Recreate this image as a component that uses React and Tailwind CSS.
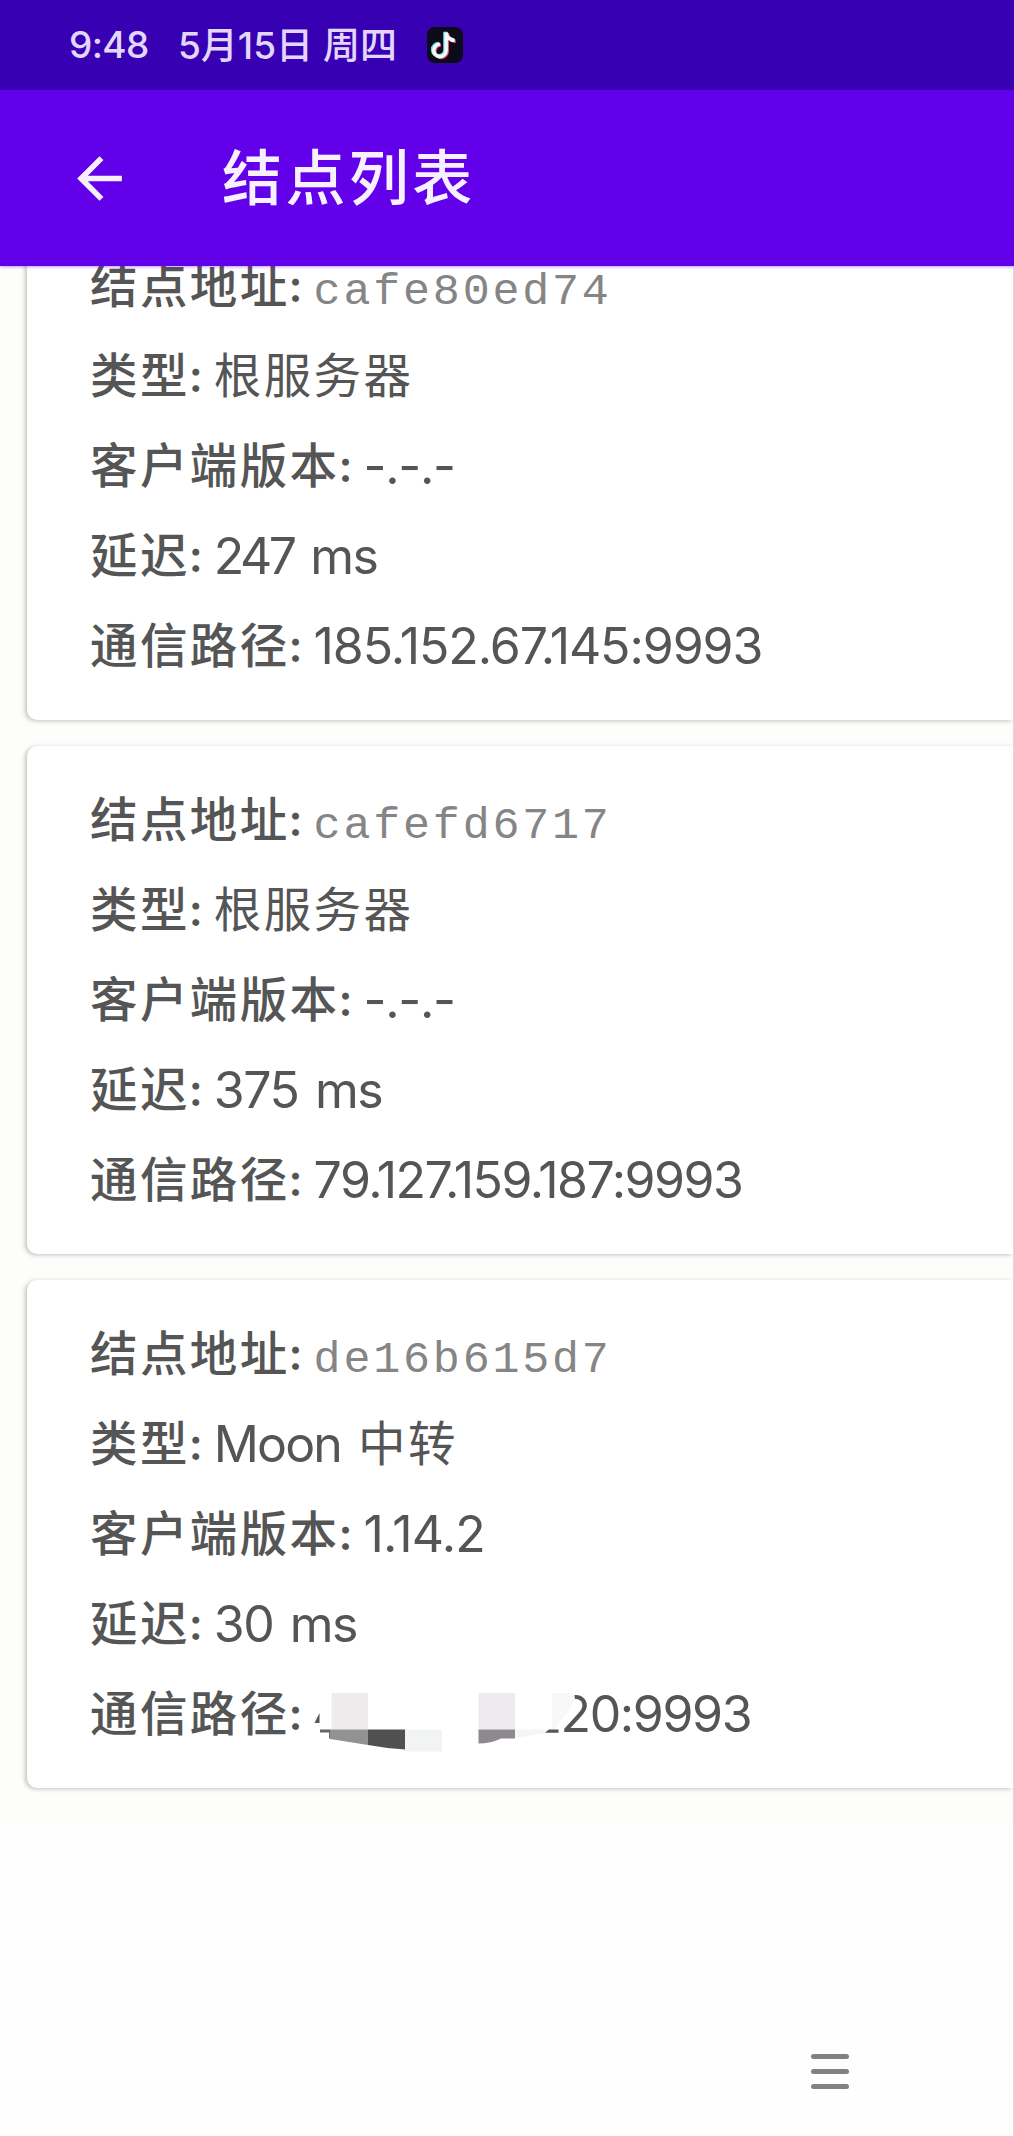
import React from 'react';

const NODES = [
  {
    address: 'cafe80ed74',
    type: '根服务器',
    version: '-.-.-',
    versionSpacing: 'tracking-[-1.300px]',
    latency: '247',
    latencySpacing: 'tracking-[-3.500px]',
    path: '185.152.67.145:9993',
    pathSpacing: 'tracking-[-1.080px]',
  },
  {
    address: 'cafefd6717',
    type: '根服务器',
    version: '-.-.-',
    versionSpacing: 'tracking-[-1.300px]',
    latency: '375',
    latencySpacing: 'tracking-[-1.500px]',
    path: '79.127.159.187:9993',
    pathSpacing: 'tracking-[-1.500px]',
  },
  {
    address: 'de16b615d7',
    prefix: 'Moon ',
    type: '中转',
    version: '1.14.2',
    versionSpacing: 'tracking-[-0.800px]',
    latency: '30',
    latencySpacing: 'tracking-[-1.500px]',
    path: '20:9993',
    pathSpacing: 'tracking-[-1.400px]',
    masked: true,
  },
];

function StatusBar() {
  return (
    <div className="h-[90px] shrink-0 bg-[#3700b3] flex items-center pl-[69px] text-[#e3d6fb] text-[37px] font-medium whitespace-pre">
      <span className="w-[109px] tracking-[-0.600px]">9:48</span>
      <span className="w-[249px] pt-0.5">5月15日 周四</span>
      <svg className="w-9 h-9" viewBox="0 0 36 36">
        <rect width="36" height="36" rx="8" fill="#0d0b18" />
        <g fill="none" strokeWidth="3.600">
          <path d="M18.500 5v18a6.200 6.200 0 1 1-6.200-6.200M18.500 5c.5 4.500 4 8 8.500 8" stroke="#4fe0dc" transform="translate(-.5 -.3)" />
          <path d="M18.500 5v18a6.200 6.200 0 1 1-6.200-6.200M18.500 5c.5 4.500 4 8 8.500 8" stroke="#f0506a" transform="translate(1.700 1.200)" />
          <path d="M18.500 5v18a6.200 6.200 0 1 1-6.200-6.200M18.500 5c.5 4.500 4 8 8.500 8" stroke="#f2fbfb" transform="translate(.6 .4)" />
        </g>
      </svg>
    </div>
  );
}

function AppBar() {
  return (
    <div className="h-[176px] shrink-0 bg-[#6200ea] flex items-center pl-[66px] relative z-10 shadow-[0_1px_3px_rgba(98,0,234,0.4)]">
      <svg className="w-[67px] h-[67px]" viewBox="0 0 24 24" fill="#f7f0ff">
        <path d="M20 11H7.830l5.590-5.590L12 4l-8 8 8 8 1.410-1.410L7.830 13H20v-2z" />
      </svg>
      <h1 className="ml-[89px] text-[60px] tracking-[3.400px] font-medium text-[#f7f0ff]">结点列表</h1>
    </div>
  );
}

// Mosaic that hides the first part of the address
function Mask() {
  return (
    <svg className="w-[249px] h-[90px] -ml-0.5" viewBox="312 1669 249 90">
      <path d="M314.500 1723l5-10v10z" fill="#555" />
      <path d="M320 1729.500h11v9h-2v-6h-9z" fill="#666" />
      <rect x="331.500" y="1693" width="36.500" height="36.500" fill="#efebed" />
      <path d="M330 1729.500h38V1745l-38-6z" fill="#939292" />
      <path d="M368 1729.500h37v20q-18-1-37-4.500z" fill="#505050" />
      <rect x="405" y="1729.500" width="37" height="22" fill="#f2f4f3" />
      <rect x="478.500" y="1693" width="36.500" height="36.500" fill="#eeeaed" />
      <path d="M478.500 1729.500H515v9h-14q-10 5-22.500 5z" fill="#8e898e" />
      <path d="M515 1729.500h34l-4 3.500-30 5z" fill="#f6f4f6" />
      <path d="M552 1693h9v26l-7 10h-2z" fill="#f8f8f8" />
      <path d="M549 1729.500h9.500v3.200H545z" fill="#555" />
    </svg>
  );
}

// Pale tile of the mosaic that runs over the first digit
function MaskEdge() {
  return (
    <svg className="absolute left-0 top-0 w-4 h-[90px]" viewBox="0 0 16 90">
      <path d="M0 24h13l1 6-6 12-8 10z" fill="#f8f8f8" />
    </svg>
  );
}

function Row({ label, children }) {
  return (
    <div className="h-[90px] flex items-center whitespace-pre text-[#555]">
      <span className="text-[47.500px] tracking-[2.400px] font-medium">{label}</span>
      <span className="w-6 -ml-px mr-px text-[44px] font-semibold">:</span>
      {children}
    </div>
  );
}

function NodeCard({ node }) {
  return (
    <div className="h-[508px] shrink-0 bg-white rounded-l-[10px] py-[29px] pl-[63px] shadow-[-2px_1px_4px_rgba(60,75,65,0.32)]">
      <Row label="结点地址">
        <span className="font-['Liberation_Mono'] text-[45px] tracking-[2.800px] text-[#858585] pt-3.5">{node.address}</span>
      </Row>
      <Row label="类型">
        {node.prefix && <span className="text-[50px] tracking-[-1.900px] mr-[5px]">{node.prefix}</span>}
        <span className="text-[47.500px] tracking-[2.400px]">{node.type}</span>
      </Row>
      <Row label="客户端版本">
        <span className={`text-[50px] ${node.versionSpacing}`}>{node.version}</span>
      </Row>
      <Row label="延迟">
        <span className={`text-[50px] ${node.latencySpacing}`}>{node.latency}</span>
        <span className="text-[50px] tracking-[-1.500px] [word-spacing:4px]"> ms</span>
      </Row>
      <Row label="通信路径">
        {node.masked && <Mask />}
        <div className="relative h-full flex items-center">
          <span className={`text-[50px] ${node.pathSpacing}`}>{node.path}</span>
          {node.masked && <MaskEdge />}
        </div>
      </Row>
    </div>
  );
}

export default function App() {
  return (
    <div className="w-[1014px] h-[2136px] overflow-hidden flex flex-col bg-[#fefefe] font-[Inter,'Noto_Sans_CJK_SC',sans-serif]">
      <StatusBar />
      <AppBar />
      <div className="flex-1 min-h-0 overflow-hidden flex flex-col border-r border-[#d8d8d8]">
        <div className="-mt-[54px] pl-[27px] pb-9 flex flex-col gap-[26px] bg-[#fdfefb]">
          {NODES.map((node) => (
            <NodeCard key={node.address} node={node} />
          ))}
        </div>
      </div>
      <div className="h-[130px] shrink-0 flex justify-end items-center pr-[164px] border-r border-[#d8d8d8]">
        <div className="w-[38px] flex flex-col gap-2.5">
          <div className="h-[5px] rounded-full bg-[#828282]" />
          <div className="h-[5px] rounded-full bg-[#828282]" />
          <div className="h-[5px] rounded-full bg-[#828282]" />
        </div>
      </div>
    </div>
  );
}
